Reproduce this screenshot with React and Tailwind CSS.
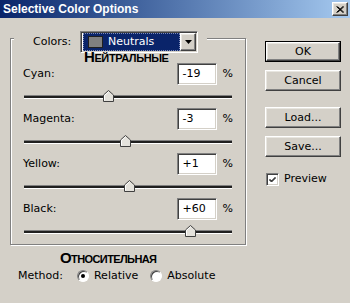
import React from "react";

const sunken =
  "border border-t-[#808080] border-l-[#808080] border-b-white border-r-white shadow-[inset_1px_1px_0_#404040,inset_-1px_-1px_0_#d4d0c8]";
const raised =
  "border border-t-white border-l-white border-b-[#404040] border-r-[#404040] shadow-[inset_-1px_-1px_0_#808080,inset_1px_1px_0_#e8e6e0]";

const channels = [
  { name: "Cyan:", value: -19 },
  { name: "Magenta:", value: -3 },
  { name: "Yellow:", value: 1 },
  { name: "Black:", value: 60 },
];

function Slider({ value }) {
  // track is 208px wide, 0 sits in the middle
  const center = 104 + value * 1.04;
  return (
    <div className="relative mt-[5px] ml-px h-[14px] w-[208px]">
      <div className="absolute left-0 right-0 top-[5px] h-[4px] border-t border-b border-t-[#808080] border-b-white bg-[#202020]" />
      <svg
        className="absolute top-0"
        style={{ left: Math.round(center) - 5 }}
        width="11"
        height="12"
        viewBox="0 0 11 12"
      >
        <path d="M0.5 11.5 V5 L5.5 0.5 L10.5 5 V11.5 Z" fill="#e4e2dc" stroke="#404040" />
        <path d="M1.5 10.5 V5.4 L5.5 1.8" fill="none" stroke="#fff" />
      </svg>
    </div>
  );
}

function Channel({ name, value }) {
  const text = value > 0 ? `+${value}` : `${value}`;
  return (
    <div className="flex flex-col">
      <div className="flex h-[22px] items-center justify-between pl-[12px] pr-[12px]">
        <span>{name}</span>
        <div className="flex items-center">
          <div className={`flex h-[22px] w-[40px] items-center bg-white pl-[5px] ${sunken}`}>
            {text}
          </div>
          <span className="ml-[6px]">%</span>
        </div>
      </div>
      <div className="pl-[12px]">
        <Slider value={value} />
      </div>
    </div>
  );
}

function Button({ children, isDefault }) {
  return (
    <div
      className={`flex h-[21px] w-[76px] items-center justify-center ${
        isDefault ? "border border-black" : ""
      }`}
    >
      <div className={`flex h-full w-full items-center justify-center bg-[#d4d0c8] ${raised}`}>
        {children}
      </div>
    </div>
  );
}

function Radio({ checked }) {
  return (
    <div className="flex h-[12px] w-[12px] items-center justify-center rounded-full border border-t-[#808080] border-l-[#808080] border-b-white border-r-white bg-white shadow-[inset_1px_1px_0_#404040]">
      {checked && <div className="h-[4px] w-[4px] rounded-full bg-black" />}
    </div>
  );
}

export default function App() {
  return (
    <div className="h-[303px] w-[350px] overflow-hidden bg-[#d4d0c8] font-['DejaVu_Sans',sans-serif] text-[11px] leading-[14px] text-black">
      {/* title bar */}
      <div className="flex h-[18px] items-center justify-between bg-gradient-to-r from-[#0a246a] to-[#a6caf0] pl-[3px] pr-[2px]">
        <span className="font-['Liberation_Sans',sans-serif] text-[12px] font-bold text-white">
          Selective Color Options
        </span>
        <div className={`flex h-[14px] w-[16px] items-center justify-center bg-[#d4d0c8] ${raised}`}>
          <svg width="8" height="7" viewBox="0 0 8 7">
            <path d="M0.5 0.5 L7 6.5 M1.5 0.5 L8 6.5 M7 0.5 L0.5 6.5 M8 0.5 L1.5 6.5" stroke="#000" strokeWidth="1" />
          </svg>
        </div>
      </div>

      <div className="flex">
        {/* left column */}
        <div className="flex flex-col">
          <div className="relative ml-[10px] mt-[20px] w-[236px] border border-[#808080] pb-[5px] pt-[24px] shadow-[inset_1px_1px_0_#fff,1px_1px_0_#fff]">
            <div className="absolute left-[3px] top-[-8px] flex h-[22px] w-[193px] items-center bg-[#d4d0c8] pl-[19px]">
              <span className="w-[47px]">Colors:</span>
              <div className={`flex h-[22px] w-[118px] items-center bg-white p-px ${sunken}`}>
                <div className="ml-px flex h-[18px] flex-1 items-center border border-dotted border-[#7f8cb8] bg-[#0a246a] pl-[4px] text-white">
                  <div className="h-[12px] w-[15px] border border-[#202020] bg-[#808080]" />
                  <span className="ml-[5px]">Neutrals</span>
                </div>
                <div className={`flex h-[18px] w-[16px] items-center justify-center bg-[#d4d0c8] ${raised}`}>
                  <svg width="7" height="4" viewBox="0 0 7 4">
                    <path d="M0 0 H7 L3.5 4 Z" fill="#000" />
                  </svg>
                </div>
              </div>
            </div>
            <span className="absolute left-[73px] top-[11px] font-['Liberation_Sans',sans-serif] text-[15px] font-bold leading-[14px] tracking-[-0.4px] [font-variant:small-caps]">
              Нейтральные
            </span>
            <div className="flex flex-col gap-[4px]">
              {channels.map((c) => (
                <Channel key={c.name} name={c.name} value={c.value} />
              ))}
            </div>
          </div>

          <span className="ml-[60px] mt-[5px] font-['Liberation_Sans',sans-serif] text-[15px] font-bold leading-[15px] tracking-[-0.6px] [font-variant:small-caps]">
            Относительная
          </span>
          <div className="ml-[18px] mt-[4px] flex h-[14px] items-center">
            <span>Method:</span>
            <div className="ml-[14px]">
              <Radio checked />
            </div>
            <span className="ml-[5px]">Relative</span>
            <div className="ml-[12px]">
              <Radio />
            </div>
            <span className="ml-[5px]">Absolute</span>
          </div>
        </div>

        {/* right column */}
        <div className="ml-[19px] flex flex-col pt-[23px]">
          <Button isDefault>OK</Button>
          <div className="mt-[8px]">
            <Button>Cancel</Button>
          </div>
          <div className="mt-[16px]">
            <Button>Load...</Button>
          </div>
          <div className="mt-[8px]">
            <Button>Save...</Button>
          </div>
          <div className="mt-[15px] flex h-[14px] items-center pl-px">
            <div className={`flex h-[13px] w-[13px] items-center justify-center bg-white ${sunken}`}>
              <svg width="7" height="7" viewBox="0 0 7 7">
                <path d="M0.5 3 L2.5 5 L6.5 1 M0.5 4 L2.5 6 L6.5 2" fill="none" stroke="#000" />
              </svg>
            </div>
            <span className="ml-[5px]">Preview</span>
          </div>
        </div>
      </div>
    </div>
  );
}
